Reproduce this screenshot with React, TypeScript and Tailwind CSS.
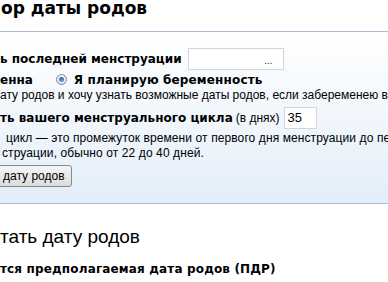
import React from "react";

const bold = "font-['DejaVu_Sans',sans-serif] font-bold";
const arial = "font-['Liberation_Sans',Arial,sans-serif]";

export default function App() {
  return (
    <div className="w-[388px] h-[282px] overflow-hidden bg-white text-black">
      <h1 className={`${bold} text-[17px] leading-[16px] h-[31px] whitespace-nowrap pl-[1px]`}>
        ор даты родов
      </h1>

      <div className="border-y border-[#a8bdd0] bg-gradient-to-b from-white to-[#e3eef9] h-[173px] pt-[15px]">
        <div className="flex items-center h-[23px] whitespace-nowrap">
          <span className={`${bold} text-[12px]`}>ь последней менструации</span>
          <div className="ml-[6px] w-[96px] h-[22px] border border-[#cfd6de] bg-white flex items-end justify-end pr-[10px] pb-[3px]">
            <span className={`${arial} text-[10px] leading-none text-[#333]`}>...</span>
          </div>
        </div>

        <div className="flex items-center h-[17px] mt-[1px] whitespace-nowrap">
          <span className={`${bold} text-[12px]`}>енна</span>
          <span className="ml-[23px] w-[11px] h-[11px] rounded-full border border-[#7d8a99] bg-gradient-to-b from-[#f2f4f6] to-[#dfe4ea] flex items-center justify-center">
            <span className="w-[5px] h-[5px] rounded-full bg-gradient-to-b from-[#2f5f8c] to-[#6fa7d4]" />
          </span>
          <span className={`${bold} text-[12px] ml-[7px] tracking-[0.15px]`}>Я планирую беременность</span>
        </div>

        <div className={`${arial} text-[12px] leading-[14px] whitespace-nowrap`}>
          ату родов и хочу узнать возможные даты родов, если забеременею в ближайшее время
        </div>

        <div className="flex items-center h-[23px] mt-[4px] whitespace-nowrap">
          <span className={`${bold} text-[12px]`}>ть вашего менструального цикла</span>
          <span className={`${arial} text-[12px] ml-[3px]`}>(в днях)</span>
          <div className="ml-[4px] w-[33px] h-[22px] border border-[#cfd6de] bg-white flex items-center pl-[3px]">
            <span className={`${arial} text-[13px]`}>35</span>
          </div>
        </div>

        <div className={`${arial} text-[12px] leading-[15px] tracking-[0.1px] whitespace-nowrap mt-[2px]`}>
          <div className="pl-[6px]">цикл — это промежуток времени от первого дня менструации до первого дня следующей</div>
          <div className="pl-[2px]">струации, обычно от 22 до 40 дней.</div>
        </div>

        <button className={`${arial} text-[12px] mt-[4px] ml-[-4px] h-[22px] pl-[6px] pr-[6px] border border-[#8a8a8a] rounded-[3px] bg-gradient-to-b from-[#f6f6f6] to-[#dcdcdc]`}>
          дату родов
        </button>
      </div>

      <h2 className={`${arial} text-[19px] leading-[22px] mt-[22px] whitespace-nowrap`}>тать дату родов</h2>
      <div className={`${bold} text-[12px] mt-[12px] tracking-[0.15px] whitespace-nowrap`}>тся предполагаемая дата родов (ПДР)</div>
    </div>
  );
}
